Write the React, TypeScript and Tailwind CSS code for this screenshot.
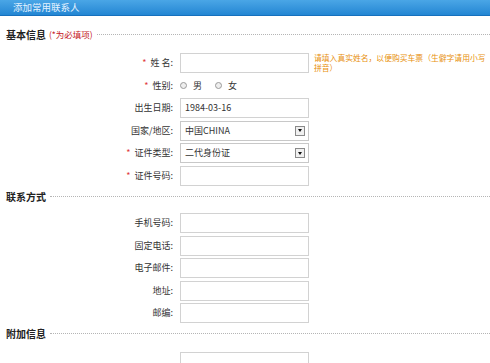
import type { ReactNode } from "react";

const font = "font-['Noto_Sans_CJK_SC','Liberation_Sans',sans-serif]";

function SectionHeading({ title, note, className }: { title: string; note?: string; className?: string }) {
  return (
    <div className={`flex h-[14px] items-center pl-[6px] ${className ?? ""}`}>
      <span className="text-[10px] font-bold text-[#222]">{title}</span>
      {note && <span className="ml-[3px] text-[8.5px] text-[#c4161c]">{note}</span>}
      <div className="ml-[4px] flex-1 border-t border-dotted border-[#b5b5b5]" />
    </div>
  );
}

function Row({ label, req, children }: { label: string; req?: boolean; children: ReactNode }) {
  return (
    <div className="flex h-[20px] items-center">
      <div className="w-[173px] shrink-0 text-right text-[9px] text-[#333]">
        {req && <span className="mr-[4px] text-[#e0393e]">*</span>}
        {label}
      </div>
      <div className="ml-[7px] flex items-center">{children}</div>
    </div>
  );
}

function TextBox({ value }: { value?: string }) {
  return (
    <div className="h-[20px] w-[129px] border border-[#d2d2d2] bg-white px-[4px] text-[9px] leading-[18px] text-[#333]">
      {value}
    </div>
  );
}

function SelectBox({ value }: { value: string }) {
  return (
    <div className="relative h-[20px] w-[129px] border border-[#c8c8c8] bg-white px-[4px] text-[9px] leading-[18px] text-[#333]">
      {value}
      <div className="absolute right-[3px] top-[4px] flex h-[10px] w-[10px] items-center justify-center border border-[#8a8a8a] bg-[#f0f0f0]">
        <div className="h-0 w-0 border-l-[2.5px] border-r-[2.5px] border-t-[3px] border-l-transparent border-r-transparent border-t-[#111]" />
      </div>
    </div>
  );
}

function Radio({ label }: { label: string }) {
  return (
    <span className="mr-[13px] flex items-center text-[9px] text-[#333]">
      <span className="mr-[6px] h-[7px] w-[7px] rounded-full border border-[#9a9a9a] bg-[#eee]" />
      {label}
    </span>
  );
}

export default function App() {
  return (
    <div className={`h-[363px] w-[490px] overflow-hidden bg-white ${font}`}>
      <div className="h-[16px] border-b border-[#1670bd] bg-gradient-to-b from-[#4aa6e6] to-[#2286d3] pl-[13px] text-[9.5px] leading-[15px] text-[#e4f2ff]">
        添加常用联系人
      </div>

      <SectionHeading title="基本信息" note="(*为必填项)" className="mt-[11px]" />
      <div className="mt-[12px] flex flex-col gap-[2.5px]">
        <div className="flex items-start">
          <Row label="姓 名:" req>
            <TextBox />
          </Row>
          <p className="ml-[5px] w-[174px] text-[7.8px] leading-[10px] text-[#e8900c]">
            请填入真实姓名，以便购买车票（生僻字请用小写拼音）
          </p>
        </div>
        <Row label="性别:" req>
          <Radio label="男" />
          <Radio label="女" />
        </Row>
        <Row label="出生日期:">
          <TextBox value="1984-03-16" />
        </Row>
        <Row label="国家/地区:">
          <SelectBox value="中国CHINA" />
        </Row>
        <Row label="证件类型:" req>
          <SelectBox value="二代身份证" />
        </Row>
        <Row label="证件号码:" req>
          <TextBox />
        </Row>
      </div>

      <SectionHeading title="联系方式" className="mt-[3.5px]" />
      <div className="mt-[10px] flex flex-col gap-[2.5px]">
        <Row label="手机号码:">
          <TextBox />
        </Row>
        <Row label="固定电话:">
          <TextBox />
        </Row>
        <Row label="电子邮件:">
          <TextBox />
        </Row>
        <Row label="地址:">
          <TextBox />
        </Row>
        <Row label="邮编:">
          <TextBox />
        </Row>
      </div>

      <SectionHeading title="附加信息" className="mt-[3px]" />
      <div className="mt-[12px] flex flex-col gap-[2.5px]">
        <Row label="">
          <TextBox />
        </Row>
      </div>
    </div>
  );
}
